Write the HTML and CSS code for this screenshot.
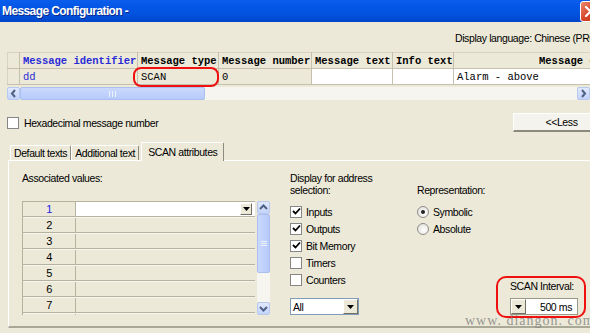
FILE: index.html
```html
<!DOCTYPE html>
<html lang="en">

<head>
  <meta charset="UTF-8">
  <title>Message Configuration</title>
  <link rel="stylesheet" href="styles.css">
</head>

<body>
  <div class="window">
    <div class="titlebar">
      <span class="title">Message Configuration -</span>
      <span class="close-btn">
        <svg width="21" height="21" viewBox="0 0 21 21">
          <path d="M6 6 L15 15 M15 6 L6 15" stroke="#fff" stroke-width="2.2" stroke-linecap="round" />
        </svg>
      </span>
    </div>

    <div class="lang">Display language: Chinese (PRC)</div>

    <div class="msg-grid">
      <table class="msg-table">
        <colgroup>
          <col style="width:12px">
          <col style="width:118px">
          <col style="width:81px">
          <col style="width:93px">
          <col style="width:81px">
          <col style="width:61px">
          <col style="width:170px">
        </colgroup>
        <tr class="head">
          <th></th>
          <th class="blue">Message identifier</th>
          <th>Message type</th>
          <th>Message number</th>
          <th>Message text</th>
          <th>Info text</th>
          <th class="far">Message event</th>
        </tr>
        <tr class="data">
          <td class="rowhead"></td>
          <td class="blue">dd</td>
          <td>SCAN</td>
          <td>0</td>
          <td class="white"></td>
          <td class="white"></td>
          <td class="white">Alarm - above</td>
        </tr>
      </table>
      <div class="hscroll">
        <span class="sb-btn">
          <svg width="13" height="13" viewBox="0 0 13 13"><path d="M8 3 L5 6.5 L8 10" fill="none" stroke="#4d6185" stroke-width="2" /></svg>
        </span>
        <span class="h-thumb"><span class="grip-v"></span></span>
        <span class="h-track"></span>
        <span class="sb-btn">
          <svg width="13" height="13" viewBox="0 0 13 13"><path d="M5 3 L8 6.5 L5 10" fill="none" stroke="#4d6185" stroke-width="2" /></svg>
        </span>
      </div>
    </div>

    <div class="options">
      <label class="check"><span class="box"></span>Hexadecimal message number</label>
      <span class="less-btn">&lt;&lt;Less</span>
    </div>

    <div class="tabs">
      <span class="tab">Default texts</span>
      <span class="tab">Additional text</span>
      <span class="tab active">SCAN attributes</span>
    </div>

    <div class="panel">
      <div class="col-values">
        <div class="label">Associated values:</div>
        <div class="values">
          <div class="values-grid">
            <div class="vrow first"><span class="num blue">1</span><span class="val"><span class="drop-btn small"><svg width="7" height="4" viewBox="0 0 7 4"><path d="M0 0 H7 L3.5 4 Z" fill="#000" /></svg></span></span></div>
            <div class="vrow"><span class="num">2</span><span class="val"></span></div>
            <div class="vrow"><span class="num">3</span><span class="val"></span></div>
            <div class="vrow"><span class="num">4</span><span class="val"></span></div>
            <div class="vrow"><span class="num">5</span><span class="val"></span></div>
            <div class="vrow"><span class="num">6</span><span class="val"></span></div>
            <div class="vrow"><span class="num">7</span><span class="val"></span></div>
            <div class="vrow"><span class="num">8</span><span class="val"></span></div>
          </div>
          <div class="vscroll">
            <span class="sb-btn">
              <svg width="13" height="13" viewBox="0 0 13 13"><path d="M3 8 L6.5 4.5 L10 8" fill="none" stroke="#4d6185" stroke-width="2" /></svg>
            </span>
            <span class="v-thumb"><span class="grip-h"></span></span>
            <span class="v-track"></span>
            <span class="sb-btn">
              <svg width="13" height="13" viewBox="0 0 13 13"><path d="M3 5 L6.5 8.5 L10 5" fill="none" stroke="#4d6185" stroke-width="2" /></svg>
            </span>
          </div>
        </div>
      </div>

      <div class="col-address">
        <div class="label">Display for address<br>selection:</div>
        <div class="check-list">
          <label class="check"><span class="box checked"><svg width="9" height="9" viewBox="0 0 9 9"><path d="M1 4 L3.5 6.5 L8 1.5" fill="none" stroke="#000" stroke-width="1.8" /></svg></span>Inputs</label>
          <label class="check"><span class="box checked"><svg width="9" height="9" viewBox="0 0 9 9"><path d="M1 4 L3.5 6.5 L8 1.5" fill="none" stroke="#000" stroke-width="1.8" /></svg></span>Outputs</label>
          <label class="check"><span class="box checked"><svg width="9" height="9" viewBox="0 0 9 9"><path d="M1 4 L3.5 6.5 L8 1.5" fill="none" stroke="#000" stroke-width="1.8" /></svg></span>Bit Memory</label>
          <label class="check"><span class="box"></span>Timers</label>
          <label class="check"><span class="box"></span>Counters</label>
        </div>
        <div class="select all-select">
          <span class="select-text">All</span>
          <span class="drop-btn"><svg width="7" height="4" viewBox="0 0 7 4"><path d="M0 0 H7 L3.5 4 Z" fill="#000" /></svg></span>
        </div>
      </div>

      <div class="col-repr">
        <div class="label">&nbsp;<br>Representation:</div>
        <div class="radio-list">
          <label class="radio"><span class="dot on"></span>Symbolic</label>
          <label class="radio"><span class="dot"></span>Absolute</label>
        </div>
        <div class="scan-interval">
          <div class="label">SCAN Interval:</div>
          <div class="select spin">
            <span class="drop-btn"><svg width="7" height="4" viewBox="0 0 7 4"><path d="M0 0 H7 L3.5 4 Z" fill="#000" /></svg></span>
            <span class="select-text right">500 ms</span>
          </div>
        </div>
      </div>
    </div>

    <!-- red marks drawn over the screenshot -->
    <div class="mark mark-type"></div>
    <div class="mark mark-scan"></div>
    <div class="watermark">www. diangon. com</div>
  </div>
</body>

</html>
```

FILE: styles.css
```css
* {
  padding: 0;
  margin: 0;
  box-sizing: border-box;
}

body {
  width: 590px;
  height: 333px;
  overflow: hidden;
  background: #ece9d8;
  font-family: "Liberation Sans", Arial, sans-serif;
  font-size: 10.5px;
  letter-spacing: -0.4px;
  color: #000;
}

.window {
  position: relative;
  width: 620px;
  height: 333px;
  background: #ece9d8;
}

.titlebar {
  display: flex;
  align-items: center;
  justify-content: space-between;
  height: 22px;
  padding: 0 19px 0 2px;
  background: linear-gradient(#0a5eec, #0457e6 30%, #0251dc 70%, #0045cb);
}

.title {
  color: #fff;
  font-weight: bold;
  font-size: 12px;
  letter-spacing: -0.6px;
  text-shadow: 1px 1px 0 #0a2a8c;
}

.close-btn {
  display: block;
  width: 21px;
  height: 21px;
  border: 1px solid #fff;
  border-radius: 3px;
  background: linear-gradient(135deg, #e88c6e, #d6452a 50%, #c2330f);
}

.close-btn svg {
  display: block;
  margin: -1px;
}

.lang {
  height: 30px;
  padding: 10px 0 0 455px;
  white-space: nowrap;
}

/* message table */

.msg-grid {
  margin-left: 7px;
}

.msg-table {
  border-collapse: collapse;
  table-layout: fixed;
  width: 616px;
  font-family: "Liberation Mono", "Courier New", monospace;
  font-size: 10.5px;
  letter-spacing: 0;
  border-left: 1px solid #d8d4c4;
  border-top: 1px solid #d8d4c4;
}

.msg-table th,
.msg-table td {
  height: 16px;
  padding: 0 3px;
  text-align: left;
  white-space: nowrap;
  overflow: hidden;
  border-right: 1px solid #c5c1ae;
  border-bottom: 1px solid #c5c1ae;
  background: #ece9d8;
}

.msg-table th {
  font-weight: bold;
}

.msg-table th.far {
  padding-left: 85px;
}

.msg-table .blue {
  color: #2b2bd6;
}

.msg-table td.white {
  background: #fff;
}

.hscroll {
  display: flex;
  height: 13px;
  margin-top: 2px;
  width: 583px;
}

.sb-btn {
  display: block;
  width: 13px;
  height: 13px;
  border: 1px solid #b8c8ef;
  border-radius: 2px;
  background: linear-gradient(#e1e9fd, #c3d3fb);
}

.sb-btn svg {
  display: block;
  margin: -1px;
}

.h-thumb {
  display: flex;
  align-items: center;
  justify-content: center;
  width: 185px;
  height: 13px;
  border: 1px solid #aabef0;
  border-radius: 2px;
  background: linear-gradient(#cad9fd, #b7cafa);
}

.grip-v {
  width: 7px;
  height: 6px;
  border-left: 1px solid #eef2fe;
  border-right: 1px solid #eef2fe;
  background: linear-gradient(90deg, transparent 2px, #eef2fe 2px, #eef2fe 3px, transparent 3px);
}

.h-track {
  flex: 1;
  background: #f6f5ef;
}

/* hexadecimal line */

.options {
  display: flex;
  align-items: center;
  justify-content: space-between;
  height: 33px;
  margin-top: 6px;
  padding-left: 7px;
  padding-right: 10px;
}

.check {
  display: flex;
  align-items: center;
  gap: 5px;
  height: 17px;
  white-space: nowrap;
}

.box {
  display: flex;
  align-items: center;
  justify-content: center;
  width: 12px;
  height: 12px;
  background: #fff;
  border: 1px solid #868686;
  flex: none;
}

.less-btn {
  display: flex;
  align-items: center;
  justify-content: center;
  width: 97px;
  height: 19px;
  background: #f4f3ee;
  border-top: 1px solid #fff;
  border-left: 1px solid #fff;
  border-right: 1px solid #a7a592;
  border-bottom: 2px solid #8c8a7a;
}

/* tabs */

.tabs {
  display: flex;
  align-items: flex-end;
  height: 20px;
  padding-left: 10px;
  margin-top: 1px;
}

.tab {
  display: flex;
  align-items: center;
  height: 15px;
  padding: 0 3px;
  border-top: 1px solid #fff;
  border-left: 1px solid #fff;
  border-right: 1px solid #8d8b7d;
  border-radius: 2px 2px 0 0;
}

.tab.active {
  height: 19px;
  padding: 0 6px;
  margin-left: 2px;
  margin-bottom: -1px;
  background: #ece9d8;
  position: relative;
  z-index: 1;
}

/* panel */

.panel {
  display: flex;
  height: 168px;
  margin-left: 8px;
  padding: 11px 0 0 13px;
  border-top: 1px solid #fff;
  border-left: 1px solid #fff;
  border-bottom: 2px solid #a9a796;
}

.label {
  line-height: 12px;
}

.col-values {
  width: 268px;
}

.values {
  display: flex;
  margin-top: 17px;
}

.values-grid {
  width: 233px;
  height: 114px;
  overflow: hidden;
  border-left: 1px solid #b5b29d;
}

.vrow {
  display: flex;
  height: 16px;
  border-bottom: 1px solid #b5b29d;
  border-top: 1px solid #f5f4ee;
}

.vrow.first {
  border-top: 1px solid #b5b29d;
}

.num {
  width: 53px;
  text-align: center;
  border-right: 1px solid #b5b29d;
  line-height: 14px;
  font-size: 11px;
}

.num.blue {
  color: #2020e0;
}

.val {
  flex: 1;
  display: flex;
  justify-content: flex-end;
  align-items: center;
  padding-right: 3px;
}

.first .val {
  background: #fff;
}

.drop-btn {
  display: flex;
  align-items: center;
  justify-content: center;
  width: 15px;
  height: 15px;
  background: #ece9d8;
  border-top: 1px solid #fff;
  border-left: 1px solid #fff;
  border-right: 1px solid #716f64;
  border-bottom: 1px solid #716f64;
}

.drop-btn.small {
  width: 12px;
  height: 12px;
}

.vscroll {
  display: flex;
  flex-direction: column;
  width: 13px;
  height: 114px;
  margin-left: 2px;
}

.v-thumb {
  display: flex;
  align-items: center;
  justify-content: center;
  height: 59px;
  border: 1px solid #aabef0;
  border-radius: 2px;
  background: linear-gradient(90deg, #cad9fd, #b7cafa);
}

.grip-h {
  width: 6px;
  height: 7px;
  background: linear-gradient(transparent 0, transparent 1px, #eef2fe 1px, #eef2fe 2px, transparent 2px, transparent 3px, #eef2fe 3px, #eef2fe 4px, transparent 4px, transparent 5px, #eef2fe 5px, #eef2fe 6px, transparent 6px);
}

.v-track {
  flex: 1;
  background: #f6f5ef;
}

.col-address {
  width: 127px;
}

.check-list {
  display: flex;
  flex-direction: column;
  margin-top: 7px;
}

.check-list .check {
  gap: 4px;
}

.select {
  display: flex;
  align-items: center;
  height: 17px;
  background: #fff;
  border: 1px solid #7f9db9;
}

.all-select {
  width: 69px;
  margin-top: 10px;
}

.select-text {
  flex: 1;
  padding-left: 2px;
}

.select-text.right {
  text-align: right;
  padding-right: 5px;
}

.col-repr {
  display: flex;
  flex-direction: column;
  width: 175px;
}

.radio-list {
  display: flex;
  flex-direction: column;
  margin-top: 7px;
}

.radio {
  display: flex;
  align-items: center;
  gap: 4px;
  height: 17px;
}

.dot {
  display: flex;
  align-items: center;
  justify-content: center;
  width: 12px;
  height: 12px;
  border-radius: 50%;
  border: 1px solid #8d8d8d;
  background: radial-gradient(circle at 60% 60%, #fff, #dcdbd3);
}

.dot.on::after {
  content: "";
  width: 4px;
  height: 4px;
  border-radius: 50%;
  background: #222;
}

.scan-interval {
  margin-top: 43px;
  margin-left: 93px;
}

.spin {
  width: 68px;
  margin-top: 6px;
  border-color: #9a9886;
}

/* annotation overlays */

.mark {
  position: absolute;
  border: 2px solid #f01010;
  border-radius: 8px;
}

.mark-type {
  left: 133px;
  top: 67px;
  width: 86px;
  height: 20px;
}

.mark-scan {
  left: 496px;
  top: 276px;
  width: 90px;
  height: 42px;
  border-radius: 10px;
}

.watermark {
  position: absolute;
  left: 465px;
  top: 313px;
  font-family: "Liberation Serif", "Times New Roman", serif;
  font-size: 14px;
  letter-spacing: 1px;
  color: rgba(120, 120, 120, 0.75);
  white-space: nowrap;
}
```
